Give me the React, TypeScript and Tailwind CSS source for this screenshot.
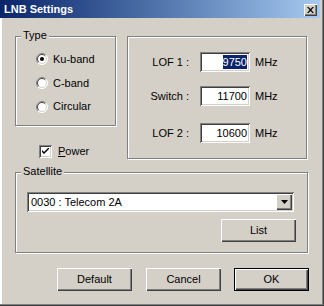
import React from "react";

const raised =
  "shadow-[inset_1px_1px_0_#fff,inset_-1px_-1px_0_#404040,inset_-2px_-2px_0_#808080]";
const sunken =
  "shadow-[inset_1px_1px_0_#808080,inset_-1px_-1px_0_#fff,inset_2px_2px_0_#404040,inset_-2px_-2px_0_#d4d0c8]";

function Radio({ checked }: { checked?: boolean }) {
  return (
    <svg width="12" height="12" viewBox="0 0 12 12" className="shrink-0">
      <circle cx="6" cy="6" r="5.5" fill="#fff" />
      <path d="M2.1 9.9 A5.5 5.5 0 0 1 9.9 2.1" stroke="#808080" fill="none" strokeWidth="1" />
      <path d="M9.9 2.1 A5.5 5.5 0 0 1 2.1 9.9" stroke="#fff" fill="none" strokeWidth="1" />
      <path d="M2.8 9.2 A4.5 4.5 0 0 1 9.2 2.8" stroke="#404040" fill="none" strokeWidth="1" />
      <path d="M9.2 2.8 A4.5 4.5 0 0 1 2.8 9.2" stroke="#d4d0c8" fill="none" strokeWidth="1" />
      {checked && <circle cx="6" cy="6" r="2" fill="#000" />}
    </svg>
  );
}

function Group({
  label,
  className,
  children,
}: {
  label?: string;
  className: string;
  children?: React.ReactNode;
}) {
  return (
    <div
      className={`relative border border-[#808080] shadow-[inset_1px_1px_0_#fff,1px_1px_0_#fff] ${className}`}
    >
      {label && (
        <span className="absolute left-[5px] top-[-8px] bg-[#d4d0c8] px-[2px] leading-[13px]">
          {label}
        </span>
      )}
      {children}
    </div>
  );
}

function Btn({ label, def, className = "" }: { label: string; def?: boolean; className?: string }) {
  return (
    <div
      className={`flex h-[23px] w-[75px] items-center justify-center ${
        def ? "border border-black " : ""
      }${className}`}
    >
      <div className={`flex h-full w-full items-center justify-center ${raised}`}>{label}</div>
    </div>
  );
}

function Field({ label, value, selected, mt }: { label: string; value: string; selected?: boolean; mt: string }) {
  return (
    <div className={`flex h-[20px] items-center ${mt}`}>
      <div className="w-[61px] text-right">{label}</div>
      <div className={`ml-[11px] flex h-[20px] w-[50px] items-center justify-end bg-white pr-[3px] ${sunken}`}>
        {selected ? <span className="bg-[#0a246a] text-white leading-[14px]">{value}</span> : <span>{value}</span>}
      </div>
      <div className="ml-[5px]">MHz</div>
    </div>
  );
}

export default function App() {
  return (
    <div className="relative h-[306px] w-[324px] overflow-hidden bg-[#d4d0c8] font-['Liberation_Sans',Arial,sans-serif] text-[11px] text-black shadow-[inset_-1px_-1px_0_#404040,inset_-2px_-2px_0_#808080,inset_2px_0_0_#fff]">
      {/* title bar */}
      <div className="mr-[4px] flex h-[18px] items-center justify-between bg-gradient-to-r from-[#0a246a] to-[#a6caf0] pl-[4px] pr-[3px]">
        <span className="text-[11px] font-bold text-white">LNB Settings</span>
        <div className={`mt-[1px] flex h-[12px] w-[13px] items-center justify-center bg-[#d4d0c8] ${raised}`}>
          <svg width="7" height="6" viewBox="0 0 7 6">
            <path d="M0 0 L1.5 0 L3.5 2 L5.5 0 L7 0 L4.3 3 L7 6 L5.5 6 L3.5 4 L1.5 6 L0 6 L2.7 3 Z" fill="#000" />
          </svg>
        </div>
      </div>

      <div className="flex flex-col pl-[15px]">
        <div className="flex items-start pt-[18px]">
          <div className="flex w-[101px] flex-col">
            <Group label="Type" className="h-[90px] w-[101px]">
              <div className="mt-[10px] flex flex-col pl-[20px]">
                <div className="flex h-[24px] items-center">
                  <Radio checked />
                  <span className="ml-[5px]">Ku-band</span>
                </div>
                <div className="flex h-[24px] items-center">
                  <Radio />
                  <span className="ml-[5px]">C-band</span>
                </div>
                <div className="flex h-[23px] items-center">
                  <Radio />
                  <span className="ml-[5px]">Circular</span>
                </div>
              </div>
            </Group>
            <div className="ml-[24px] mt-[19px] flex h-[13px] items-center">
              <div className={`flex h-[13px] w-[13px] items-center justify-center bg-white ${sunken}`}>
                <svg width="7" height="7" viewBox="0 0 7 7">
                  <path d="M0 2 L0 4 L2 6 L7 1 L7 -1 L2 4 Z" fill="#000" />
                </svg>
              </div>
              <span className="ml-[6px]">
                <span className="underline">P</span>ower
              </span>
            </div>
          </div>
          <Group className="ml-[11px] h-[123px] w-[180px]">
            <div className="flex flex-col">
              <Field label="LOF 1 :" value="9750" selected mt="mt-[15px]" />
              <Field label="Switch :" value="11700" mt="mt-[14px]" />
              <Field label="LOF 2 :" value="10600" mt="mt-[17px]" />
            </div>
          </Group>
        </div>

        <Group label="Satellite" className="mt-[13px] h-[81px] w-[293px]">
          <div className="flex flex-col pl-[11px]">
            <div className={`mt-[19px] flex h-[20px] w-[267px] items-center bg-white p-[2px] ${sunken}`}>
              <span className="ml-[2px] flex-1">0030 : Telecom 2A</span>
              <div className={`flex h-[16px] w-[16px] items-center justify-center bg-[#d4d0c8] ${raised}`}>
                <svg width="7" height="4" viewBox="0 0 7 4">
                  <path d="M0 0 L7 0 L3.5 4 Z" fill="#000" />
                </svg>
              </div>
            </div>
            <Btn label="List" className="ml-[194px] mt-[7px]" />
          </div>
        </Group>

        <div className="ml-[42px] mt-[15px] flex">
          <Btn label="Default" />
          <Btn label="Cancel" className="ml-[14px]" />
          <Btn label="OK" def className="ml-[13px]" />
        </div>
      </div>
    </div>
  );
}
